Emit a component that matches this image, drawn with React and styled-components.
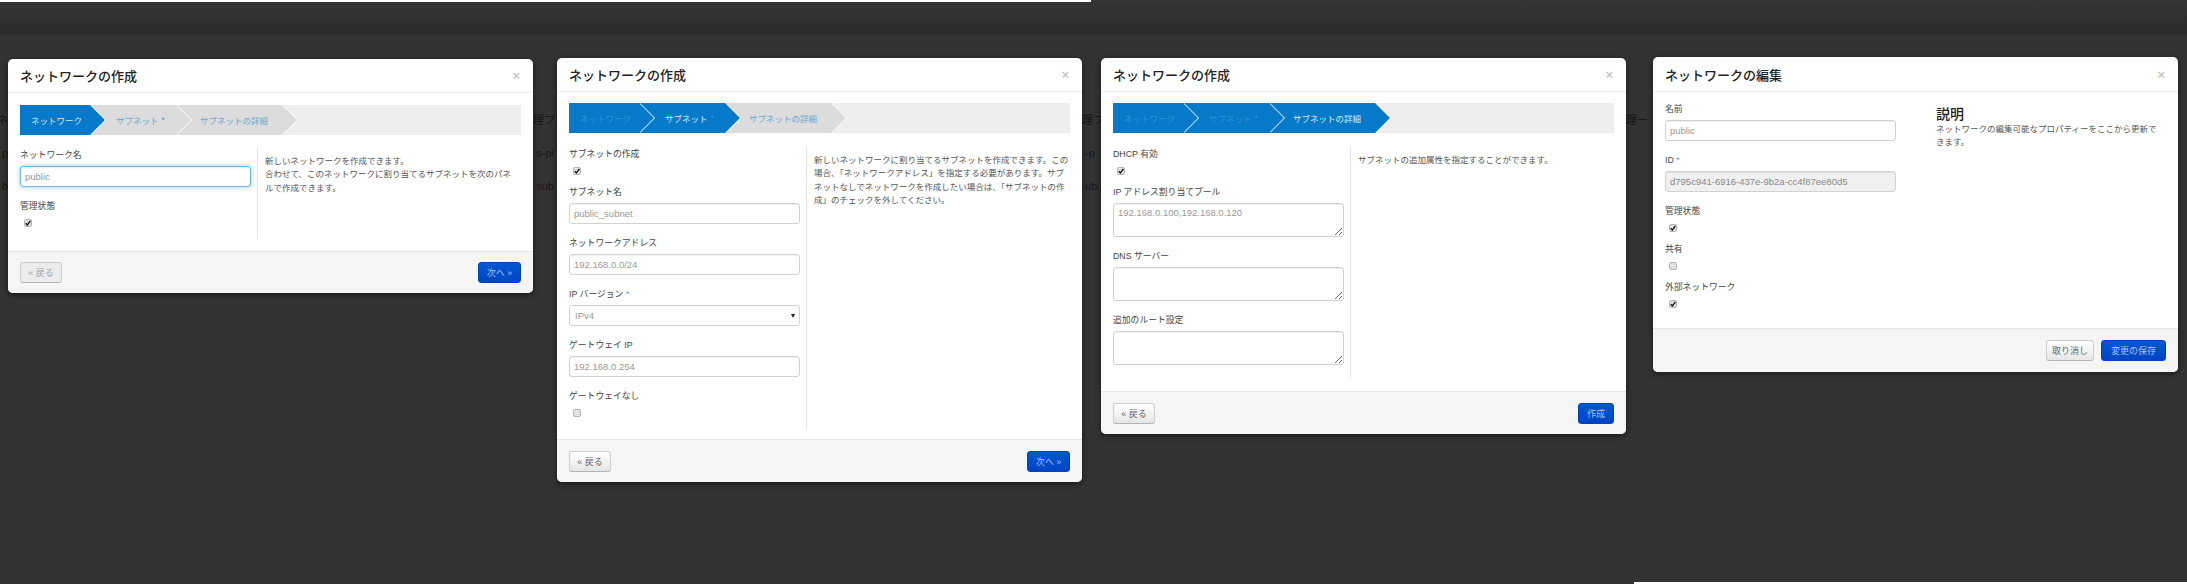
import styled, { createGlobalStyle } from "styled-components";

const GlobalStyle = createGlobalStyle`
  html, body {
    margin: 0;
    padding: 0;
    background: #333;
  }
  body {
    font-family: "Liberation Sans", "Noto Sans CJK JP", sans-serif;
    font-size: 8.5px;
    color: #444;
  }
`;

// ── Page ───────────────────────────────────────────────────────────

const Page = styled.div`
  width: 2187px;
  height: 584px;
  overflow: hidden;
  display: flex;
  flex-direction: column;
  background: linear-gradient(#353535, #2b2b2b) 0 0 / 100% 35px no-repeat, #333;
`;

const TopStrip = styled.div`
  width: 1091px;
  height: 2px;
  flex: none;
  background: #fff;
`;

const Screens = styled.div`
  flex: 1;
  display: flex;
  align-items: flex-start;
`;

const BottomStrip = styled.div`
  height: 2px;
  flex: none;
  margin-left: 1634px;
  background: #fff;
`;

// Dimmed page table that shows between the dialogs
const Gutter = styled.div`
  width: ${({ $w }) => $w}px;
  flex: none;
  overflow: hidden;
  padding-top: 110px;
  display: flex;
  flex-direction: column;
  align-items: ${({ $end }) => ($end ? "flex-end" : "flex-start")};
  color: #161616;
  font-size: 11px;
  line-height: 16px;
  white-space: nowrap;
`;

const GutterRow = styled.div`
  height: 33px;
`;

// ── Modal ──────────────────────────────────────────────────────────

const Modal = styled.div`
  width: 525px;
  flex: none;
  margin-top: ${({ $top }) => $top - 2}px;
  box-sizing: border-box;
  background: #fff;
  border-radius: 5px;
  box-shadow: 0 2px 6px rgba(0, 0, 0, 0.55);
  overflow: hidden;
`;

const Header = styled.div`
  height: ${({ $h }) => $h || 34}px;
  box-sizing: border-box;
  padding: 0 13px 0 12px;
  display: flex;
  align-items: center;
  justify-content: space-between;
  border-bottom: 1px solid #eee;
`;

const Title = styled.h3`
  margin: 0;
  font-size: 13px;
  font-weight: 500;
  color: #222;
`;

const Close = styled.span`
  font-size: 13px;
  font-weight: 700;
  color: #c8c8c8;
  line-height: 1;
`;

const Body = styled.div`
  padding: ${({ $pt }) => $pt}px 12px ${({ $pb }) => $pb}px;
`;

const Footer = styled.div`
  height: ${({ $h }) => $h || 43}px;
  box-sizing: border-box;
  padding: 0 12px;
  display: flex;
  align-items: center;
  justify-content: space-between;
  gap: 7px;
  background: #f5f5f5;
  border-top: 1px solid #e5e5e5;
`;

const Button = styled.span`
  height: 21px;
  width: ${({ $w }) => $w}px;
  box-sizing: border-box;
  display: flex;
  align-items: center;
  justify-content: center;
  border: 1px solid #ccc;
  border-bottom-color: #b5b5b5;
  border-radius: 3px;
  font-size: 9px;
  color: ${({ $disabled }) => ($disabled ? "#a5a5a5" : "#666")};
  background: ${({ $disabled }) =>
    $disabled ? "#ececec" : "linear-gradient(#fff, #e6e6e6)"};
`;

const PrimaryButton = styled(Button)`
  border: 1px solid #0044bb;
  color: #a9c3ec;
  background: linear-gradient(#0058d0, #0044c4);
`;

const Spacer = styled.span`
  flex: 1;
`;

// ── Wizard bar ─────────────────────────────────────────────────────

const Wizard = styled.div`
  display: flex;
  height: 30px;
  background: #eee;
  overflow: hidden;
`;

const stepColors = {
  done: { bg: "#0679c9", text: "#3094da" },
  active: { bg: "#0679c9", text: "#d8e9f6" },
  idle: { bg: "#dcdcdc", text: "#66a9d2" },
};

const Step = styled.div`
  position: relative;
  z-index: ${({ $z }) => $z};
  width: ${({ $w }) => $w}px;
  box-sizing: border-box;
  padding-left: ${({ $pl }) => $pl}px;
  display: flex;
  align-items: center;
  gap: 3px;
  font-size: 8.5px;
  color: ${({ $state }) => stepColors[$state].text};
  background: ${({ $state }) => stepColors[$state].bg};

  &::before,
  &::after {
    content: "";
    position: absolute;
    top: 0;
    width: 0;
    height: 0;
    border-style: solid;
    border-width: 15px 0 15px 15px;
    border-color: transparent;
  }
  &::before {
    right: -16px;
    border-left-color: #fff;
  }
  &::after {
    right: -15px;
    border-left-color: ${({ $state }) => stepColors[$state].bg};
  }
`;

const StepMark = styled.span`
  color: ${({ $state }) => ($state === "idle" ? "#5f93b5" : "#3094da")};
`;

// ── Two column form ────────────────────────────────────────────────

const Columns = styled.div`
  display: flex;
  margin-top: ${({ $mt }) => $mt}px;
`;

const FormColumn = styled.div`
  width: 238px;
  flex: none;
  box-sizing: border-box;
  padding: 0 6px 2px 0;
  border-right: 1px solid #e4e4e4;
`;

const HelpColumn = styled.div`
  padding: 7px 0 0 7px;
  font-size: 8.5px;
  line-height: 13.4px;
  color: #555;
  white-space: nowrap;
`;

const EditColumns = styled.div`
  display: flex;
`;

const EditForm = styled.div`
  width: 231px;
  flex: none;
`;

const EditHelp = styled.div`
  padding: 4px 0 0 40px;
  font-size: 8.5px;
  line-height: 13.4px;
  color: #555;
  white-space: nowrap;
`;

const HelpTitle = styled.h4`
  margin: 0;
  font-size: 14px;
  line-height: 17px;
  font-weight: 500;
  color: #222;
`;

const Label = styled.label`
  display: block;
  height: 14px;
  line-height: 14px;
  margin-bottom: 4px;
  font-size: 8.8px;
  color: #444;
`;

const CheckLabel = styled(Label)`
  margin-bottom: 0;
`;

const Required = styled.span`
  color: #4f9fd4;
`;

const Input = styled.input`
  display: block;
  width: 100%;
  height: 21px;
  box-sizing: border-box;
  margin-bottom: 12px;
  padding: 0 4px;
  border: 1px solid ${({ $focus }) => ($focus ? "#74b3e3" : "#d2d2d2")};
  border-radius: 3px;
  outline: none;
  font-family: inherit;
  font-size: 9.5px;
  color: ${({ $locked }) => ($locked ? "#888" : "#999")};
  background: ${({ $locked }) => ($locked ? "#f0f0f0" : "#fff")};
  box-shadow: ${({ $focus }) =>
    $focus
      ? "inset 0 1px 2px rgba(0,0,0,.08), 0 0 5px rgba(82,168,236,.6)"
      : "inset 0 1px 1px rgba(0,0,0,.07)"};
`;

const TextArea = styled.textarea`
  display: block;
  width: 100%;
  height: 34px;
  box-sizing: border-box;
  margin-bottom: 12px;
  padding: 3px 4px;
  border: 1px solid #d2d2d2;
  border-radius: 3px;
  outline: none;
  font-family: inherit;
  font-size: 9.5px;
  color: #999;
  background: #fff;
  box-shadow: inset 0 1px 1px rgba(0, 0, 0, 0.07);
`;

const SelectWrap = styled.div`
  position: relative;
  margin-bottom: 12px;

  &::after {
    content: "";
    position: absolute;
    right: 5px;
    top: 9px;
    border-style: solid;
    border-width: 4px 2.5px 0;
    border-color: #222 transparent transparent;
  }
`;

const Select = styled.select`
  display: block;
  width: 100%;
  height: 21px;
  box-sizing: border-box;
  padding: 0 5px;
  appearance: none;
  border: 1px solid #d2d2d2;
  border-radius: 3px;
  outline: none;
  font-family: inherit;
  font-size: 9.5px;
  color: #999;
  background: #fff;
`;

const CheckRow = styled.div`
  height: 24px;
  padding: 6px 0 0 4px;
  box-sizing: border-box;
`;

const CheckBox = styled.span`
  display: block;
  width: 8px;
  height: 8px;
  box-sizing: border-box;
  border: 1px solid #b4b4b4;
  border-radius: 2px;
  background: #e2e2e2;
`;

const Tick = styled.svg`
  display: block;
  width: 6px;
  height: 6px;
`;

function Check({ checked }) {
  return (
    <CheckRow>
      <CheckBox>
        {checked && (
          <Tick viewBox="0 0 6 6">
            <path d="M0.8 3.2 L2.4 5 L5.4 0.8" fill="none" stroke="#111" strokeWidth="1.3" />
          </Tick>
        )}
      </CheckBox>
    </CheckRow>
  );
}

function ModalHeader({ title, h }) {
  return (
    <Header $h={h}>
      <Title>{title}</Title>
      <Close>×</Close>
    </Header>
  );
}

function Steps({ states }) {
  return (
    <Wizard>
      <Step $z={3} $w={70} $pl={11} $state={states[0]}>ネットワーク</Step>
      <Step $z={2} $w={86} $pl={26} $state={states[1]}>
        サブネット<StepMark $state={states[1]}>*</StepMark>
      </Step>
      <Step $z={1} $w={106} $pl={24} $state={states[2]}>サブネットの詳細</Step>
    </Wizard>
  );
}

export default function App() {
  return (
    <Page>
      <GlobalStyle />
      <TopStrip />
      <Screens>
        <Gutter $w={8} $end>
          <GutterRow>プネ</GutterRow>
          <GutterRow>p</GutterRow>
          <GutterRow>b</GutterRow>
        </Gutter>

        {/* Step 1 */}
        <Modal $top={59}>
          <ModalHeader title="ネットワークの作成" />
          <Body $pt={12} $pb={12}>
            <Steps states={["active", "idle", "idle"]} />
            <Columns $mt={13}>
              <FormColumn>
                <Label>ネットワーク名</Label>
                <Input $focus readOnly value="public" />
                <CheckLabel>管理状態</CheckLabel>
                <Check checked />
              </FormColumn>
              <HelpColumn>
                新しいネットワークを作成できます。
                <br />
                合わせて、このネットワークに割り当てるサブネットを次のパネ
                <br />
                ルで作成できます。
              </HelpColumn>
            </Columns>
          </Body>
          <Footer $h={42}>
            <Button $w={42} $disabled>« 戻る</Button>
            <PrimaryButton $w={43}>次へ »</PrimaryButton>
          </Footer>
        </Modal>

        <Gutter $w={24}>
          <GutterRow>理プネ</GutterRow>
          <GutterRow>&nbsp;s-pi</GutterRow>
          <GutterRow>&nbsp;sub</GutterRow>
        </Gutter>

        {/* Step 2 */}
        <Modal $top={58}>
          <ModalHeader title="ネットワークの作成" />
          <Body $pt={11} $pb={10}>
            <Steps states={["done", "active", "idle"]} />
            <Columns $mt={14}>
              <FormColumn>
                <CheckLabel>サブネットの作成</CheckLabel>
                <Check checked />
                <Label>サブネット名</Label>
                <Input readOnly value="public_subnet" />
                <Label>ネットワークアドレス</Label>
                <Input readOnly value="192.168.0.0/24" />
                <Label>IP バージョン <Required>*</Required></Label>
                <SelectWrap>
                  <Select defaultValue="ipv4">
                    <option value="ipv4">IPv4</option>
                    <option value="ipv6">IPv6</option>
                  </Select>
                </SelectWrap>
                <Label>ゲートウェイ IP</Label>
                <Input readOnly value="192.168.0.254" />
                <CheckLabel>ゲートウェイなし</CheckLabel>
                <Check />
              </FormColumn>
              <HelpColumn>
                新しいネットワークに割り当てるサブネットを作成できます。この
                <br />
                場合、「ネットワークアドレス」を指定する必要があります。サブ
                <br />
                ネットなしでネットワークを作成したい場合は、「サブネットの作
                <br />
                成」のチェックを外してください。
              </HelpColumn>
            </Columns>
          </Body>
          <Footer>
            <Button $w={42}>« 戻る</Button>
            <PrimaryButton $w={43}>次へ »</PrimaryButton>
          </Footer>
        </Modal>

        <Gutter $w={19}>
          <GutterRow>理プネ</GutterRow>
          <GutterRow>&nbsp;-p</GutterRow>
          <GutterRow>&nbsp;ub</GutterRow>
        </Gutter>

        {/* Step 3 */}
        <Modal $top={58}>
          <ModalHeader title="ネットワークの作成" />
          <Body $pt={11} $pb={12}>
            <Steps states={["done", "done", "active"]} />
            <Columns $mt={14}>
              <FormColumn>
                <CheckLabel>DHCP 有効</CheckLabel>
                <Check checked />
                <Label>IP アドレス割り当てプール</Label>
                <TextArea readOnly value="192.168.0.100,192.168.0.120" />
                <Label>DNS サーバー</Label>
                <TextArea readOnly />
                <Label>追加のルート設定</Label>
                <TextArea readOnly />
              </FormColumn>
              <HelpColumn>サブネットの追加属性を指定することができます。</HelpColumn>
            </Columns>
          </Body>
          <Footer>
            <Button $w={42}>« 戻る</Button>
            <PrimaryButton $w={36}>作成</PrimaryButton>
          </Footer>
        </Modal>

        <Gutter $w={27}>
          <GutterRow>理ー</GutterRow>
        </Gutter>

        {/* Edit dialog */}
        <Modal $top={57}>
          <ModalHeader title="ネットワークの編集" h={35} />
          <Body $pt={10} $pb={10}>
            <EditColumns>
              <EditForm>
                <Label>名前</Label>
                <Input readOnly value="public" />
                <Label>ID <Required>*</Required></Label>
                <Input $locked readOnly value="d795c941-6916-437e-9b2a-cc4f87ee80d5" />
                <CheckLabel>管理状態</CheckLabel>
                <Check checked />
                <CheckLabel>共有</CheckLabel>
                <Check />
                <CheckLabel>外部ネットワーク</CheckLabel>
                <Check checked />
              </EditForm>
              <EditHelp>
                <HelpTitle>説明</HelpTitle>
                ネットワークの編集可能なプロパティーをここから更新で
                <br />
                きます。
              </EditHelp>
            </EditColumns>
          </Body>
          <Footer $h={44}>
            <Spacer />
            <Button $w={48}>取り消し</Button>
            <PrimaryButton $w={65}>変更の保存</PrimaryButton>
          </Footer>
        </Modal>
      </Screens>
      <BottomStrip />
    </Page>
  );
}
